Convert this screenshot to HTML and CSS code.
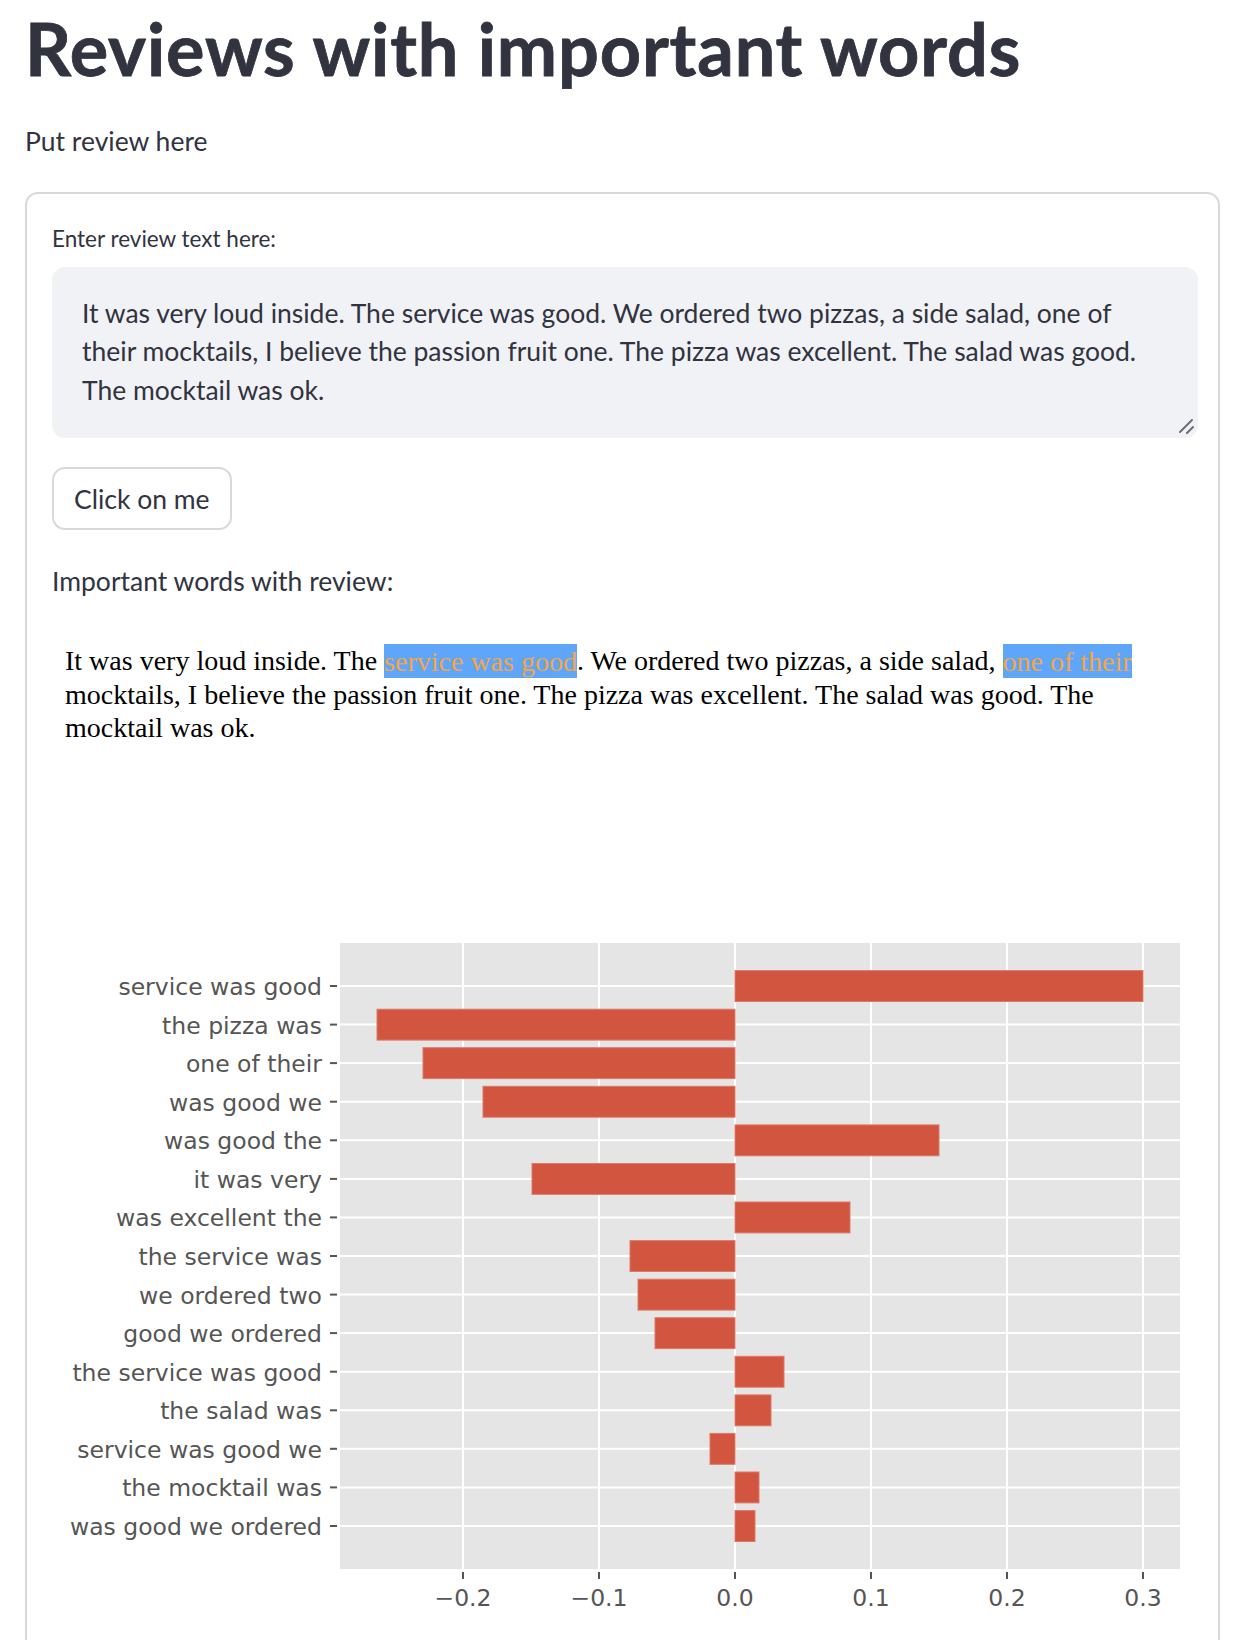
FILE: index.html
```html
<!DOCTYPE html>
<html lang="en">
<head>
<meta charset="utf-8">
<title>Reviews with important words</title>
<link rel="stylesheet" href="styles.css">
</head>
<body>
<main class="app">
  <h1 class="title">Reviews with important words</h1>
  <p class="lead">Put review here</p>
  <section class="form">
    <label class="field-label" for="review">Enter review text here:</label>
    <div class="input-wrap">
      <textarea id="review" class="review-input">It was very loud inside. The service was good. We ordered two pizzas, a side salad, one of their mocktails, I believe the passion fruit one. The pizza was excellent. The salad was good. The mocktail was ok.</textarea>
      <svg class="resize-handle" width="16" height="16" viewBox="0 0 16 16" aria-hidden="true">
        <line x1="2" y1="14" x2="14" y2="2" stroke="#6b6d76" stroke-width="2" stroke-linecap="round"/>
        <line x1="9" y1="15" x2="15" y2="9" stroke="#6b6d76" stroke-width="2" stroke-linecap="round"/>
      </svg>
    </div>
    <button class="btn" type="button">Click on me</button>
    <p class="section-label">Important words with review:</p>
    <div class="highlight-frame">
      <p class="highlight-text">It was very loud inside. The <span class="hl">service was good</span>. We ordered two pizzas, a side salad, <span class="hl">one of their</span> mocktails, I believe the passion fruit one. The pizza was excellent. The salad was good. The mocktail was ok.</p>
    </div>
    <svg class="chart" width="1146" height="880" viewBox="52 760 1146 880" xmlns="http://www.w3.org/2000/svg">
      <rect x="340" y="943" width="840" height="626" fill="#e5e5e5"/>
      <g stroke="#ffffff" stroke-width="2">
        <line x1="463" y1="943" x2="463" y2="1569"/>
        <line x1="599" y1="943" x2="599" y2="1569"/>
        <line x1="735" y1="943" x2="735" y2="1569"/>
        <line x1="871" y1="943" x2="871" y2="1569"/>
        <line x1="1007" y1="943" x2="1007" y2="1569"/>
        <line x1="1143" y1="943" x2="1143" y2="1569"/>
        <line x1="340" y1="986" x2="1180" y2="986"/>
        <line x1="340" y1="1024.6" x2="1180" y2="1024.6"/>
        <line x1="340" y1="1063.1" x2="1180" y2="1063.1"/>
        <line x1="340" y1="1101.7" x2="1180" y2="1101.7"/>
        <line x1="340" y1="1140.3" x2="1180" y2="1140.3"/>
        <line x1="340" y1="1178.9" x2="1180" y2="1178.9"/>
        <line x1="340" y1="1217.4" x2="1180" y2="1217.4"/>
        <line x1="340" y1="1256" x2="1180" y2="1256"/>
        <line x1="340" y1="1294.6" x2="1180" y2="1294.6"/>
        <line x1="340" y1="1333.1" x2="1180" y2="1333.1"/>
        <line x1="340" y1="1371.7" x2="1180" y2="1371.7"/>
        <line x1="340" y1="1410.3" x2="1180" y2="1410.3"/>
        <line x1="340" y1="1448.8" x2="1180" y2="1448.8"/>
        <line x1="340" y1="1487.4" x2="1180" y2="1487.4"/>
        <line x1="340" y1="1526" x2="1180" y2="1526"/>
      </g>
      <g fill="#d25540" stroke="#dc7a69" stroke-width="1">
        <rect x="735" y="970.6" width="408" height="30.9"/>
        <rect x="377" y="1009.2" width="358" height="30.9"/>
        <rect x="423" y="1047.7" width="312" height="30.9"/>
        <rect x="483" y="1086.3" width="252" height="30.9"/>
        <rect x="735" y="1124.9" width="204" height="30.9"/>
        <rect x="532" y="1163.5" width="203" height="30.9"/>
        <rect x="735" y="1202" width="115" height="30.9"/>
        <rect x="630" y="1240.6" width="105" height="30.9"/>
        <rect x="638" y="1279.2" width="97" height="30.9"/>
        <rect x="655" y="1317.7" width="80" height="30.9"/>
        <rect x="735" y="1356.3" width="49" height="30.9"/>
        <rect x="735" y="1394.9" width="36" height="30.9"/>
        <rect x="710" y="1433.4" width="25" height="30.9"/>
        <rect x="735" y="1472" width="24" height="30.9"/>
        <rect x="735" y="1510.6" width="20" height="30.9"/>
      </g>
      <g stroke="#555555" stroke-width="2">
        <line x1="330" y1="986" x2="337" y2="986"/>
        <line x1="330" y1="1024.6" x2="337" y2="1024.6"/>
        <line x1="330" y1="1063.1" x2="337" y2="1063.1"/>
        <line x1="330" y1="1101.7" x2="337" y2="1101.7"/>
        <line x1="330" y1="1140.3" x2="337" y2="1140.3"/>
        <line x1="330" y1="1178.9" x2="337" y2="1178.9"/>
        <line x1="330" y1="1217.4" x2="337" y2="1217.4"/>
        <line x1="330" y1="1256" x2="337" y2="1256"/>
        <line x1="330" y1="1294.6" x2="337" y2="1294.6"/>
        <line x1="330" y1="1333.1" x2="337" y2="1333.1"/>
        <line x1="330" y1="1371.7" x2="337" y2="1371.7"/>
        <line x1="330" y1="1410.3" x2="337" y2="1410.3"/>
        <line x1="330" y1="1448.8" x2="337" y2="1448.8"/>
        <line x1="330" y1="1487.4" x2="337" y2="1487.4"/>
        <line x1="330" y1="1526" x2="337" y2="1526"/>
        <line x1="463" y1="1572" x2="463" y2="1579"/>
        <line x1="599" y1="1572" x2="599" y2="1579"/>
        <line x1="735" y1="1572" x2="735" y2="1579"/>
        <line x1="871" y1="1572" x2="871" y2="1579"/>
        <line x1="1007" y1="1572" x2="1007" y2="1579"/>
        <line x1="1143" y1="1572" x2="1143" y2="1579"/>
      </g>
      <g class="ylabels" text-anchor="end">
        <text x="322" y="995">service was good</text>
        <text x="322" y="1033.6">the pizza was</text>
        <text x="322" y="1072.1">one of their</text>
        <text x="322" y="1110.7">was good we</text>
        <text x="322" y="1149.3">was good the</text>
        <text x="322" y="1187.9">it was very</text>
        <text x="322" y="1226.4">was excellent the</text>
        <text x="322" y="1265">the service was</text>
        <text x="322" y="1303.6">we ordered two</text>
        <text x="322" y="1342.1">good we ordered</text>
        <text x="322" y="1380.7">the service was good</text>
        <text x="322" y="1419.3">the salad was</text>
        <text x="322" y="1457.8">service was good we</text>
        <text x="322" y="1496.4">the mocktail was</text>
        <text x="322" y="1535">was good we ordered</text>
      </g>
      <g class="xlabels" text-anchor="middle">
        <text x="463" y="1606">−0.2</text>
        <text x="599" y="1606">−0.1</text>
        <text x="735" y="1606">0.0</text>
        <text x="871" y="1606">0.1</text>
        <text x="1007" y="1606">0.2</text>
        <text x="1143" y="1606">0.3</text>
      </g>
    </svg>
  </section>
</main>
</body>
</html>
```
FILE: styles.css
```css
* { box-sizing: border-box; }

html, body {
  margin: 0;
  padding: 0;
  background: #ffffff;
}

body {
  font-family: "Lato", "Open Sans", sans-serif;
  color: #31333f;
  overflow: hidden;
}

.app {
  padding: 0 20px 0 25px;
}

.title {
  margin: 0;
  padding-top: 5px;
  font-size: 72px;
  line-height: 86px;
  font-weight: 700;
  letter-spacing: 0.85px;
  -webkit-text-stroke: 0.8px #31333f;
  color: #31333f;
}

.lead {
  margin: 29px 0 0;
  font-size: 26.5px;
  line-height: 42px;
}

.form {
  margin-top: 30px;
  border: 2px solid #d9d9dc;
  border-bottom: none;
  border-radius: 13px 13px 0 0;
  padding: 30px 20px 0 25px;
  height: 1460px;
}

.field-label {
  display: block;
  font-size: 22.5px;
  line-height: 30px;
}

.input-wrap {
  position: relative;
  margin-top: 13px;
}

.review-input {
  display: block;
  width: 100%;
  height: 171px;
  padding: 26.5px 30px 20px 30px;
  border: none;
  border-radius: 13px;
  background: #f0f2f6;
  color: #31333f;
  font-family: "Lato", "Open Sans", sans-serif;
  font-size: 26.5px;
  line-height: 38.5px;
  resize: none;
  overflow: hidden;
  outline: none;
}

.resize-handle {
  position: absolute;
  right: 4px;
  bottom: 4px;
}

.btn {
  display: block;
  margin-top: 29px;
  height: 63px;
  padding: 0 20px;
  background: #ffffff;
  border: 2px solid #d9d9dc;
  border-radius: 13px;
  color: #31333f;
  font-family: "Lato", "Open Sans", sans-serif;
  font-size: 26.5px;
}

.section-label {
  margin: 30px 0 0;
  font-size: 26.5px;
  line-height: 42px;
}

.highlight-frame {
  margin-top: 42px;
  padding: 0 14px 0 13px;
}

.highlight-text {
  margin: 0;
  font-family: "Liberation Serif", "Times New Roman", serif;
  font-size: 28px;
  line-height: 33.6px;
  color: #000000;
}

.hl {
  background: #60a6f8;
  color: #f5a544;
  padding: 1.5px 0;
}

.chart {
  display: block;
  margin-top: 15px;
}

.ylabels text,
.xlabels text {
  font-family: "DejaVu Sans", sans-serif;
  font-size: 23.5px;
  fill: #555555;
}
```
